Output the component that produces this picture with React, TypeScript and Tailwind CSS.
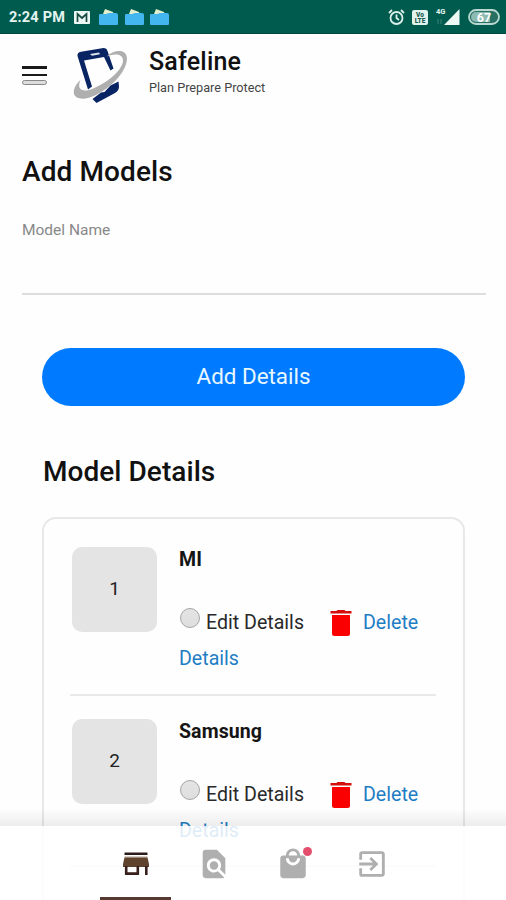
import { MdExitToApp, MdFindInPage, MdLocalMall } from "react-icons/md";

const models = [
  { id: 1, name: "MI" },
  { id: 2, name: "Samsung" },
];

function Folder() {
  return (
    <svg width="20" height="17" viewBox="0 0 20 17">
      <path d="M4 5 6 0l8 3 1 3Z" fill="#e4efce" />
      <path d="M1 5h6l3-1h7q2 0 2 2v9q0 1-1 1H1q-1 0-1-1V6q0-1 1-1Z" fill="#43b5ef" />
    </svg>
  );
}

function StatusBar() {
  return (
    <div className="flex h-[34px] shrink-0 items-center border-b border-[#00483d] bg-[#005b4f] pt-px pr-[6px] pl-[9px] text-[#e3f4ef]">
      <span className="w-[65px] pt-[2px] text-[14.5px] font-bold tracking-[0.2px] whitespace-nowrap">2:24 PM</span>
      <svg width="16" height="13" viewBox="0 0 16 13">
        <rect width="16" height="13" rx="1" fill="#edf7f4" />
        <path d="M3.500 11V3L8 7l4.500-4v8" fill="none" stroke="#174b42" strokeWidth="1.700" />
      </svg>
      <div className="ml-[9px] flex gap-[5.500px]">
        <Folder />
        <Folder />
        <Folder />
      </div>
      <div className="ml-auto flex items-center">
        <svg width="17" height="17" viewBox="0 0 17 17" fill="none" stroke="#dcefe9" strokeWidth="1.800">
          <circle cx="8.500" cy="9" r="6" />
          <path d="m1 4 3-3M16 4l-3-3M8.500 5.500V9l2.500 2" />
        </svg>
        <svg className="ml-[7px]" width="16" height="15" viewBox="0 0 16 15">
          <rect width="16" height="15" rx="2" fill="#e3f4ef" />
          <g fill="#1a5c50" fontFamily="Roboto, sans-serif" fontWeight="900" fontSize="6.500" textAnchor="middle">
            <text x="8" y="6.500">Vo</text>
            <text x="8" y="13">LTE</text>
          </g>
        </svg>
        <svg className="ml-[8px]" width="24" height="18" viewBox="0 0 24 18">
          <path d="M23.500 1v16H8Z" fill="#edf8f5" />
          <text x="0" y="6" fill="#e3f4ef" fontFamily="Roboto, sans-serif" fontWeight="700" fontSize="7.500">4G</text>
          <path d="M2 11v5M5 11v5" stroke="#3f8579" />
        </svg>
        <svg className="ml-[8px]" width="32" height="16" viewBox="0 0 32 16">
          <rect x="1" y="1" width="30" height="14" rx="7" fill="#276e63" stroke="#b9d8d0" strokeWidth="1.800" />
          <path d="M8 3h14v10H8a5 5 0 0 1 0-10Z" fill="#8dbbb1" />
          <text x="16" y="12.500" textAnchor="middle" fill="#fff" fontFamily="Roboto, sans-serif" fontWeight="700" fontSize="12.500">67</text>
        </svg>
      </div>
    </div>
  );
}

function Logo() {
  return (
    <svg width="56" height="58" viewBox="0 0 56 58">
      <g fill="#082463">
        <path d="M4.500 10Q4 6.500 8 5.700L29 2.200q4.500-.7 5.600 3L40.500 22.500 37.500 24.500 31 11 11 14.500 19 40.500 15 43.500Z" />
        <path d="m19.500 53 8.500-6.500 3.500-.5 6-6.500 8-4 .5 5q0 4-4 6.500L23.500 57Z" />
      </g>
      <path d="m17 8 9-1.500 1 1.700-8 1.600Z" fill="#dce3ed" />
      <path d="M33.500 10.500C43 2.500 54 3.500 54 13 53 27 37 42 23 49 13 54 3 54 1 48 0 43 3 38 7.500 34 4.500 41 6.500 45 14 44.500 29 41 50 25 50 14.500 50 8 42 7 33.500 10.500Z" fill="#afafaf" />
    </svg>
  );
}

function StoreIcon() {
  return (
    <svg width="34" height="34" viewBox="0 0 34 34">
      <path d="M5.500 5.500h23v2.500h-23Z" fill="#2b1a17" />
      <path d="M5.500 9h23v2.500h-23Z" fill="#d9cdc6" />
      <path d="M5.500 10.500h23L30 17v3H4v-3Z" fill="#5f432d" />
      <path d="M7.200 19v7.600h11.600V19M27.300 19v9" fill="none" stroke="#3a201d" strokeWidth="2.600" />
    </svg>
  );
}

function TrashIcon() {
  return (
    <svg className="mt-px" width="22" height="26" viewBox="0 0 22 26">
      <path d="M7.500 0h7l1 1h6v2.500H.5V1h6Z" fill="#d40d0d" />
      <path d="M2 5h18V23.500q0 2.500-2.500 2.500H4.500q-2.500 0-2.500-2.500Z" fill="#fb0000" />
    </svg>
  );
}

function ModelRow({ id, name }: { id: number; name: string }) {
  return (
    <div className="ml-[26px] flex h-[171.500px] w-[366px] border-b-2 border-[#e9e9e9] pt-[22px]">
      <div className="mt-px ml-[2px] flex size-[85px] shrink-0 items-center justify-center rounded-[10px] bg-[#e4e4e4] text-[19px] text-[#222]">
        {id}
      </div>
      <div className="ml-[22px] grow">
        <h3 className="h-[63px] pt-[2px] text-[19.500px] leading-[24px] font-bold tracking-[0.1px] text-[#151515]">{name}</h3>
        <div className="flex h-[26px] text-[19.600px] leading-[27px]">
          <span className="-mt-px mr-[6px] ml-[1px] size-[20px] shrink-0 rounded-full border-[1.500px] border-[#a5a5a5] bg-linear-to-b from-[#e4e4e4] to-[#dedede]" />
          <span className="w-[124px] whitespace-nowrap text-[#292929]">Edit Details</span>
          <TrashIcon />
          <span className="ml-[11px] text-[#1f7dc4]">Delete</span>
        </div>
        <div className="mt-[10px] text-[19.600px] leading-[27px] text-[#1f7dc4]">Details</div>
      </div>
    </div>
  );
}

function BottomNav() {
  return (
    <nav className="absolute inset-x-0 bottom-0 h-[74px] bg-white/85">
      <div className="absolute inset-x-0 bottom-full h-[18px] bg-linear-to-b from-black/0 to-black/7" />
      <div className="flex h-full pt-[21px] pl-[96.500px] text-[#afafaf]">
        <div className="flex w-[78px] justify-center">
          <StoreIcon />
        </div>
        <div className="flex w-[79px] justify-center">
          <MdFindInPage size={34} />
        </div>
        <div className="relative flex w-[79px] justify-center">
          <MdLocalMall size={34} />
          <span className="absolute top-0 right-[21px] size-[9px] rounded-full bg-[#e34e6d]" />
        </div>
        <div className="flex w-[78px] justify-center">
          <MdExitToApp size={34} />
        </div>
      </div>
      <div className="absolute bottom-0 left-[100px] h-[3px] w-[71px] bg-[#553a31]" />
    </nav>
  );
}

export default function App() {
  return (
    <div className="relative flex h-[900px] w-[506px] flex-col overflow-hidden bg-[#fefefe] font-['Roboto',sans-serif] text-[#111]">
      <StatusBar />
      <header className="flex h-[84px] shrink-0 items-start pl-[22px]">
        <div className="mt-[32px] flex w-[25px] flex-col">
          <span className="h-[2.500px] bg-[#1a1a1a]" />
          <span className="mt-[5px] h-[2.500px] bg-[#1a1a1a]" />
          <span className="mt-[4px] h-[5px] rounded-[3px] border border-[#888] bg-[#ddd]" />
        </div>
        <div className="mt-[12px] ml-[26px]">
          <Logo />
        </div>
        <div className="mt-[11px] ml-[20px]">
          <h1 className="text-[25px] leading-[33px] font-medium tracking-[0.2px]">Safeline</h1>
          <p className="mt-px text-[12.700px] leading-[18px] text-[#444]">Plan Prepare Protect</p>
        </div>
      </header>
      <section className="h-[230px] shrink-0 pt-[35px] pr-[20px] pl-[22px]">
        <h2 className="text-[28px] leading-[37px] font-medium tracking-[0.1px]">Add Models</h2>
        <label className="mt-[29px] block text-[15.500px] leading-[22px] text-[#888]">Model Name</label>
        <div className="h-[53.500px] border-b-2 border-[#dedede]" />
      </section>
      <button className="mr-[41px] ml-[42px] h-[58px] shrink-0 rounded-full bg-[#007bff] text-[22.400px] text-[#e9f7ff]">Add Details</button>
      <h2 className="mt-[47px] ml-[43px] shrink-0 text-[28px] leading-[38px] font-medium tracking-[0.05px]">Model Details</h2>
      <div className="mt-[26px] mr-[41px] ml-[42px] h-[600px] shrink-0 rounded-[14px] border-2 border-[#e8e8e8] pt-[5px]">
        {models.map((m) => (
          <ModelRow key={m.id} id={m.id} name={m.name} />
        ))}
      </div>
      <BottomNav />
    </div>
  );
}
